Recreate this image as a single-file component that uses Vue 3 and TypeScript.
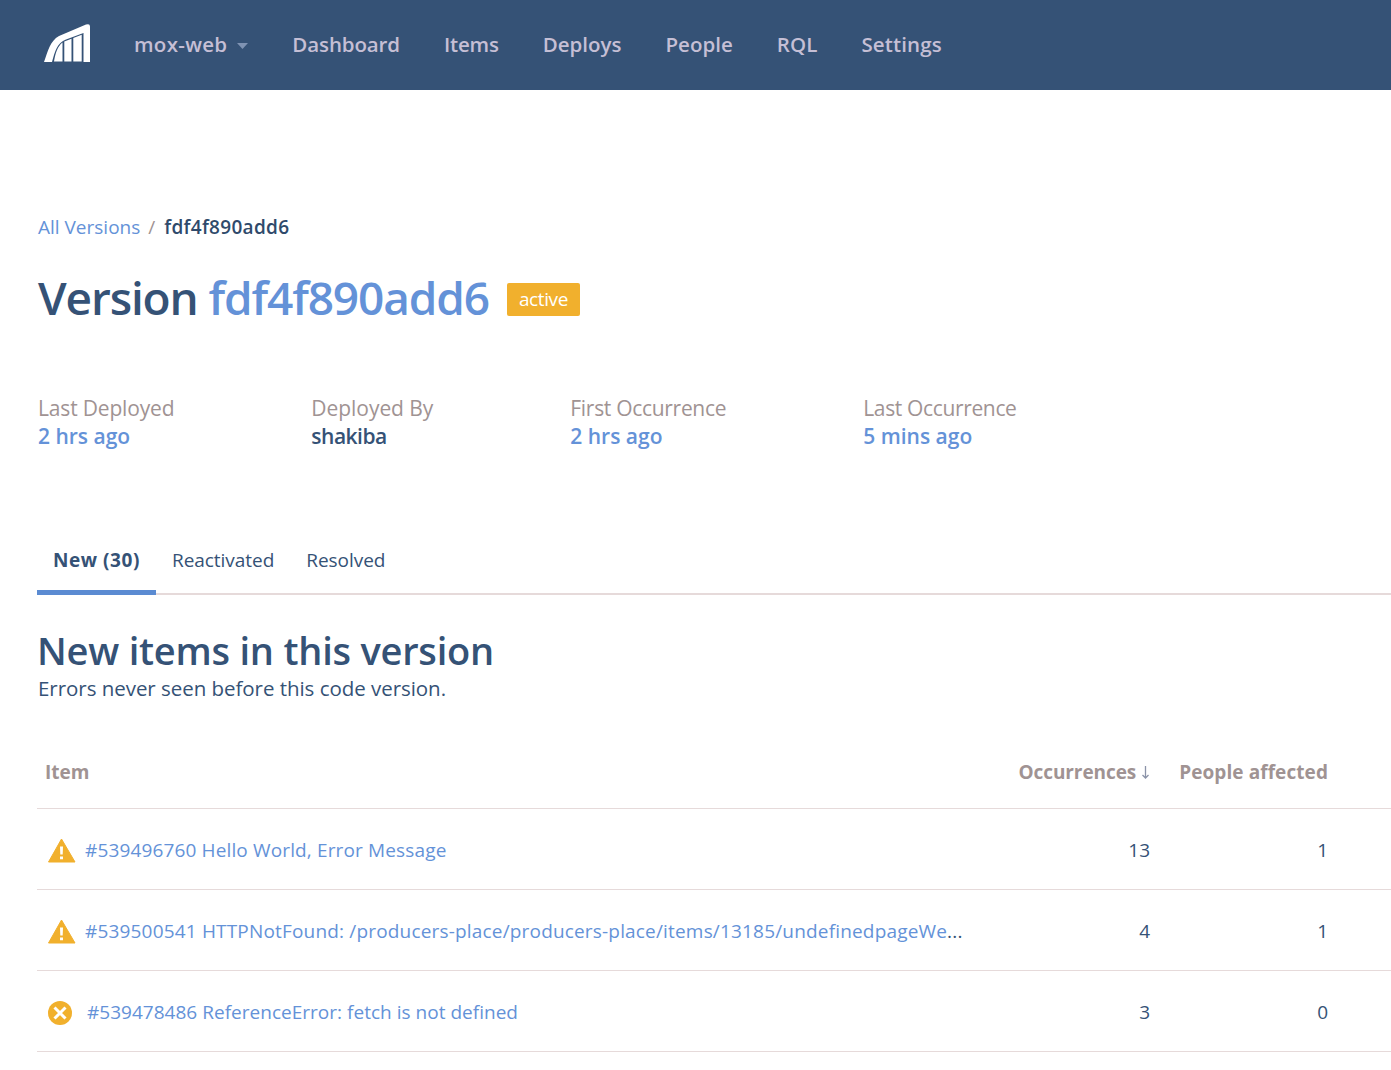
<script setup lang="ts">
interface Stat { label: string; value: string; link: boolean }
interface Item { kind: 'warning' | 'error'; title: string; truncated?: boolean; occurrences: number; people: number }

const nav: string[] = ['Dashboard', 'Items', 'Deploys', 'People', 'RQL', 'Settings']
const stats: Stat[] = [
  { label: 'Last Deployed', value: '2 hrs ago', link: true },
  { label: 'Deployed By', value: 'shakiba', link: false },
  { label: 'First Occurrence', value: '2 hrs ago', link: true },
  { label: 'Last Occurrence', value: '5 mins ago', link: true },
]
const items: Item[] = [
  { kind: 'warning', title: '#539496760 Hello World, Error Message', occurrences: 13, people: 1 },
  { kind: 'warning', title: '#539500541 HTTPNotFound: /producers-place/producers-place/items/13185/undefinedpageWe', truncated: true, occurrences: 4, people: 1 },
  { kind: 'error', title: '#539478486 ReferenceError: fetch is not defined', occurrences: 3, people: 0 },
]
</script>

<template>
  <div class="page">
    <header class="topbar">
      <svg class="logo" width="47" height="38" viewBox="0 0 47 38">
        <path fill="#fff" d="M0 38C4 27 6 17 15 12L42 .6Q46 -.8 46 2.500V38H39.500V9L22 15.500C13 19 11 27 8 38z" />
        <path fill="#fff" d="M10 37.500C11.500 29 13.500 22.500 18.500 18.500V37.500zM20.300 37.500V17.500L27.500 14.700V37.500zM29.300 37.500V14L37.700 10.800V37.500z" />
      </svg>
      <a class="project">mox-web</a>
      <svg class="caret" width="11" height="6" viewBox="0 0 11 6"><path fill="#7f93b3" d="M0 0h11L5.500 6z" /></svg>
      <nav class="nav"><a v-for="n in nav" :key="n" :class="n.toLowerCase()">{{ n }}</a></nav>
    </header>

    <main class="main">
      <div class="crumbs"><a class="link">All Versions</a><span class="slash">/</span><span class="current">fdf4f890add6</span></div>
      <div class="title">
        <h1>Version <a class="link">fdf4f890add6</a></h1>
        <span class="badge">active</span>
      </div>

      <div class="stats">
        <div v-for="s in stats" :key="s.label" class="stat">
          <div class="label">{{ s.label }}</div>
          <div class="value" :class="{ link: s.link }">{{ s.value }}</div>
        </div>
      </div>

      <div class="tabs">
        <a class="tab active">New (30)</a>
        <a class="tab">Reactivated</a>
        <a class="tab">Resolved</a>
      </div>

      <h2>New items in this version</h2>
      <p class="hint">Errors never seen before this code version.</p>

      <div class="table">
        <div class="row head">
          <span>Item</span>
          <span class="num occurrences">Occurrences <svg class="sort" width="9" height="15" viewBox="0 0 9 15"><path fill="none" stroke="#8b93a8" stroke-width="1.300" d="M4.500 1V13M1.500 10L4.500 13L7.500 10" /></svg></span>
          <span class="num affected">People affected</span>
        </div>
        <div v-for="i in items" :key="i.title" class="row">
          <span class="item" :class="[i.kind, { truncated: i.truncated }]">
            <svg v-if="i.kind === 'warning'" width="28" height="25" viewBox="0 0 28 25">
              <path fill="#f1b02d" stroke="#f1b02d" stroke-linejoin="round" d="M13.500 1L27 24H.5z" />
              <path fill="#fff" d="M12 8.500h3l-.3 8h-2.400zM12 18.500h3v2.700h-3z" />
            </svg>
            <svg v-else width="24" height="24" viewBox="0 0 24 24">
              <circle cx="12" cy="12" r="12" fill="#f1b02d" />
              <path stroke="#fff" stroke-width="3" d="M6.500 6.500l11 11M17.500 6.500l-11 11" />
            </svg>
            <span class="name"><a class="link">{{ i.title }}</a><template v-if="i.truncated">...</template></span>
          </span>
          <span class="num">{{ i.occurrences }}</span>
          <span class="num">{{ i.people }}</span>
        </div>
      </div>
    </main>
  </div>
</template>

<style>
body { margin: 0; background: #fff; }
</style>

<style scoped>
.page { height: 1070px; overflow: hidden; font: 19px/28px "Open Sans", "Noto Sans", sans-serif; color: #355276; }
.link { color: #6492d8; }

.topbar { height: 90px; box-sizing: border-box; background: #355276; display: flex; align-items: center; padding: 0 0 4px 44px; color: #c5bfd5; font-size: 20.500px; font-weight: 600; }
.project { margin: 2px 0 0 43px; letter-spacing: 0.300px; }
.caret { margin: 5px 0 0 10px; }
.nav { display: flex; gap: 44px; margin: 2px 0 0 44px; }
.dashboard { letter-spacing: -0.120px; }
.items { letter-spacing: -0.200px; }
.rql, .settings { letter-spacing: 0.120px; }

.main { padding: 123px 0 0 37px; }
.crumbs { display: flex; padding-left: 1px; }
.slash { margin: 0 9px 0 8px; color: #a09393; }
.current { font-weight: 600; color: #2f4a6b; letter-spacing: 0.300px; }
.title { display: flex; align-items: center; margin-top: 26px; padding-left: 1px; }
h1 { margin: 0; font-size: 46px; line-height: 60px; font-weight: 600; letter-spacing: -1.130px; }
.badge { margin: 5px 0 0 18px; height: 33px; width: 73px; border-radius: 2px; background: #f1b02d; color: #fff; text-align: center; line-height: 32px; letter-spacing: -0.400px; }

.stats { display: flex; gap: 137px; margin-top: 67px; padding-left: 1px; font-size: 21px; }
.label { color: #a09393; letter-spacing: -0.170px; }
.value { font-weight: 600; }
.stat:nth-child(2) .label { letter-spacing: -0.050px; }
.stat:nth-child(2) .value { letter-spacing: -0.500px; }
.stat:nth-child(3) .label { letter-spacing: -0.300px; }
.stat:nth-child(4) .label { letter-spacing: -0.350px; }

.tabs { display: flex; height: 49px; box-sizing: border-box; margin-top: 96px; box-shadow: inset 0 -2px #e6dada; }
.tab { padding: 0 16px; letter-spacing: -0.040px; }
.tab.active { font-weight: 700; letter-spacing: 0.560px; box-shadow: inset 0 -5px #5b8bd2; }

h2 { margin: 32px 0 0; font-size: 38px; line-height: 47px; font-weight: 600; letter-spacing: -0.220px; }
.hint { margin: 0 0 0 1px; font-size: 20.500px; letter-spacing: -0.040px; }

.table { margin-top: 34px; }
.row { display: grid; grid-template-columns: minmax(0, 1fr) 200px 178px; align-items: center; height: 80px; padding-right: 63px; border-bottom: 1px solid #e6dada; }
.head { height: 72px; color: #a09393; font-weight: 700; padding-left: 8px; }
.occurrences { letter-spacing: -0.080px; }
.affected { letter-spacing: 0.080px; }
.num { text-align: right; }
.row:not(.head) .num { padding-top: 2px; }
.sort { vertical-align: -1px; }
.item { display: flex; align-items: center; white-space: nowrap; padding-left: 11px; }
.item svg { margin-top: 3px; flex: none; }
.name { margin: 2px 0 0 9px; letter-spacing: 0.140px; }
.truncated .name { letter-spacing: 0.175px; }
.error .name { margin-left: 15px; letter-spacing: 0.020px; }
</style>
